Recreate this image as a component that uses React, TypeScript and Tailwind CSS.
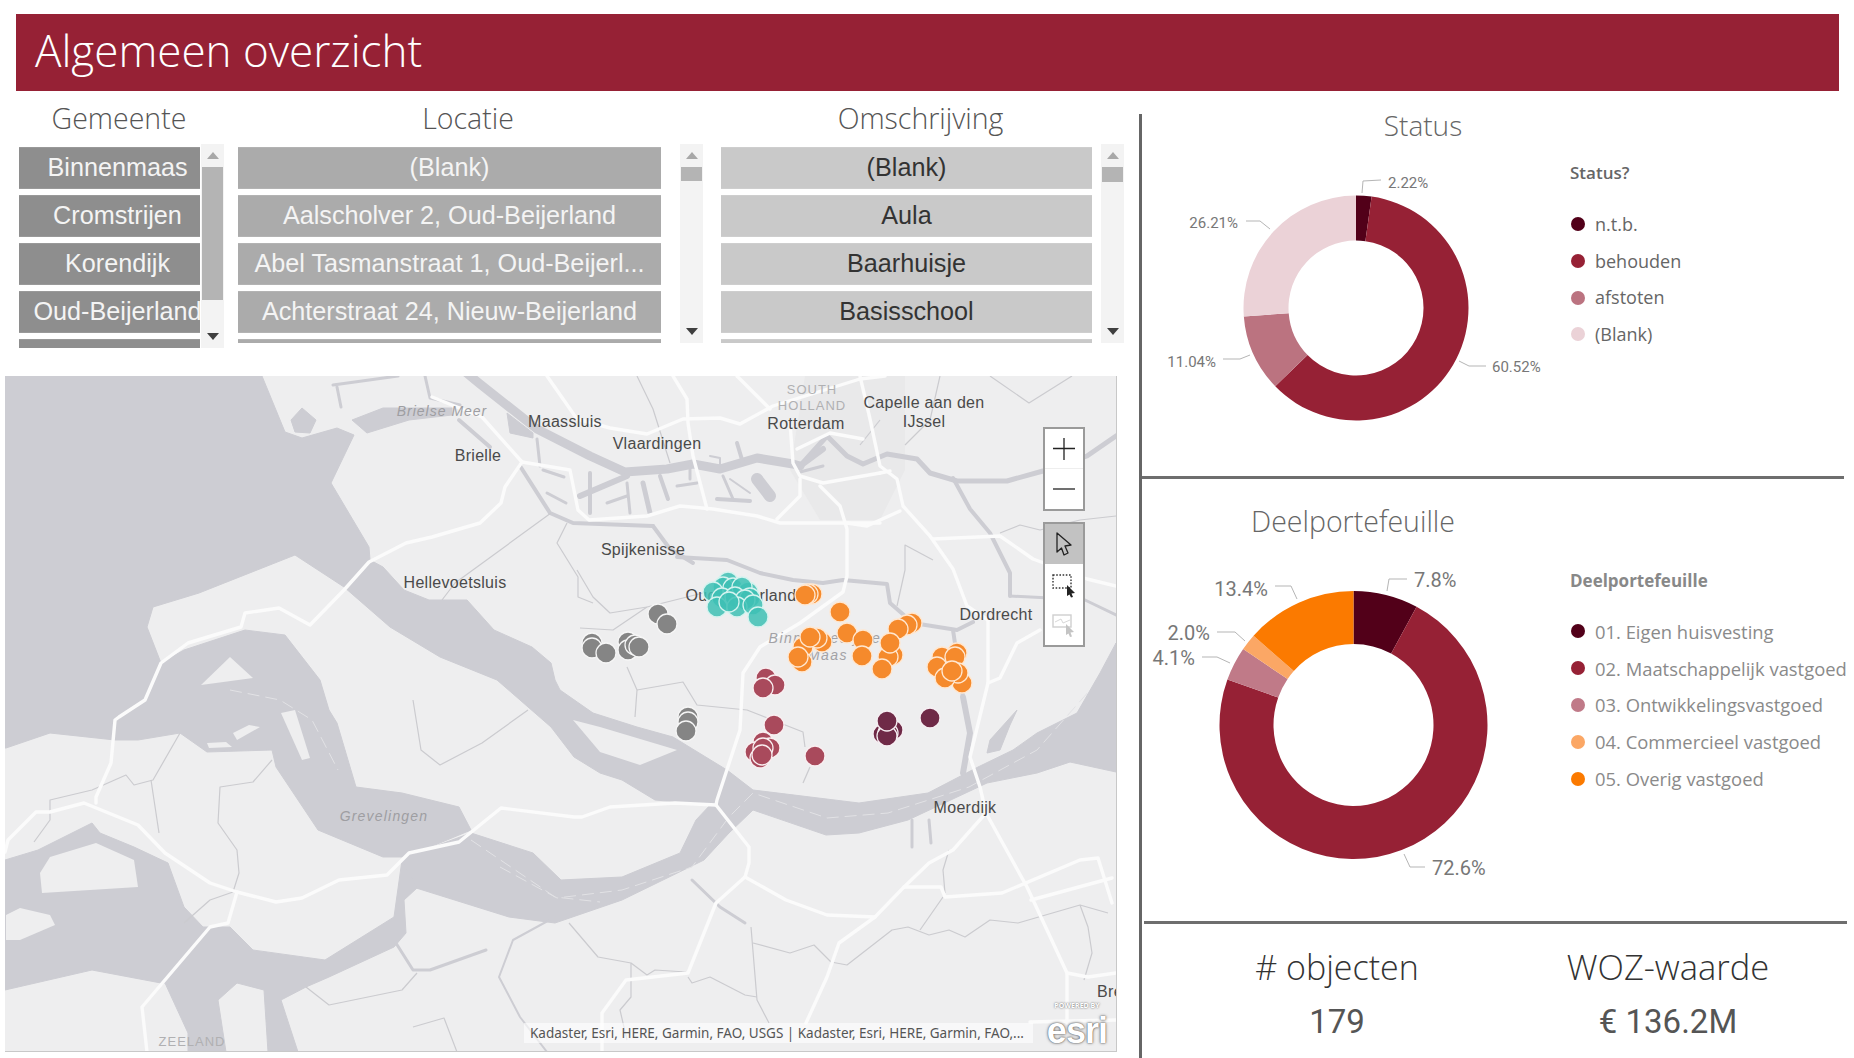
const RED = "#962135";

// ---------- chart helpers ----------
type Slice = { value: number; color: string };

function ringPaths(slices: Slice[], cx: number, cy: number, rx: number, ry: number, irx: number, iry: number) {
  let acc = 0;
  return slices.map((s) => {
    const a0 = (acc / 100) * Math.PI * 2;
    acc += s.value;
    const a1 = (acc / 100) * Math.PI * 2;
    const large = a1 - a0 > Math.PI ? 1 : 0;
    const p = (r1: number, r2: number, a: number) =>
      `${(cx + r1 * Math.sin(a)).toFixed(2)} ${(cy - r2 * Math.cos(a)).toFixed(2)}`;
    const d = `M${p(rx, ry, a0)} A${rx} ${ry} 0 ${large} 1 ${p(rx, ry, a1)} L${p(irx, iry, a1)} A${irx} ${iry} 0 ${large} 0 ${p(irx, iry, a0)} Z`;
    return { d, color: s.color };
  });
}

function Leader({ pts, x, y, label, end, size }: { pts: string; x: number; y: number; label: string; end?: boolean; size: number }) {
  return (
    <g>
      <polyline points={pts} fill="none" stroke="#b5b5b5" strokeWidth="1" />
      <text x={x} y={y} fontSize={size} fill="#777777" textAnchor={end ? "end" : "start"} dominantBaseline="central" fontFamily="Roboto, sans-serif">
        {label}
      </text>
    </g>
  );
}

const STATUS: Slice[] = [
  { value: 2.22, color: "#520019" },
  { value: 60.52, color: RED },
  { value: 11.04, color: "#bb7380" },
  { value: 26.22, color: "#ebd2d7" },
];

const DEEL: Slice[] = [
  { value: 7.8, color: "#520019" },
  { value: 72.7, color: RED },
  { value: 4.1, color: "#c07a88" },
  { value: 2.0, color: "#fba765" },
  { value: 13.4, color: "#fb7a00" },
];

function Legend({ title, items, titleClass, rowClass, textClass }: { title: string; items: { label: string; color: string }[]; titleClass: string; rowClass: string; textClass: string }) {
  return (
    <div className="flex flex-col">
      <div className={titleClass}>{title}</div>
      {items.map((it) => (
        <div key={it.label} className={rowClass}>
          <span className="w-[14px] h-[14px] rounded-full shrink-0" style={{ background: it.color }} />
          <span className={textClass}>{it.label}</span>
        </div>
      ))}
    </div>
  );
}

// ---------- slicers ----------
function Caret({ up, color }: { up?: boolean; color: string }) {
  return (
    <svg width="12" height="7" viewBox="0 0 12 7">
      <path d={up ? "M6 0 L12 7 L0 7 Z" : "M0 0 L12 0 L6 7 Z"} fill={color} />
    </svg>
  );
}

function Scrollbar({ thumb, height }: { thumb: number; height: string }) {
  return (
    <div className={`w-[23px] ${height} bg-[#f3f3f3] flex flex-col items-center shrink-0`}>
      <div className="h-[23px] flex items-center justify-center">
        <Caret up color="#a8a8a8" />
      </div>
      <div className="w-[21px] bg-[#b4b4b4]" style={{ height: thumb }} />
      <div className="flex-1" />
      <div className="h-[23px] flex items-center justify-center">
        <Caret color="#3f3f3f" />
      </div>
    </div>
  );
}

function SlicerTitle({ children }: { children: string }) {
  return <div className="mt-[9px] h-[36px] leading-[36px] pr-[5px] text-center text-[28.5px] font-light text-[#555555] font-['Open_Sans',sans-serif]">{children}</div>;
}

function Slicer({ title, items, width, itemW, itemClass, thumb, barH, gap }: { title: string; items: string[]; width: string; itemW: string; itemClass: string; thumb: number; barH: string; gap: string }) {
  return (
    <div className={`${width} shrink-0`}>
      <SlicerTitle>{title}</SlicerTitle>
      <div className="mt-[8px] flex items-start">
        <div className={`${itemW} ${barH} pt-[3px] flex flex-col gap-[6px] overflow-hidden shrink-0`}>
          {items.map((t, i) => (
            <div key={i} className={`h-[42px] shrink-0 flex items-center justify-center whitespace-nowrap overflow-hidden border-y border-white/10 text-[25.2px] font-['Liberation_Sans',Arial,sans-serif] ${itemClass}`}>
              {t}
            </div>
          ))}
        </div>
        <div className={gap} />
        <Scrollbar thumb={thumb} height={barH} />
      </div>
    </div>
  );
}

// ---------- map data (page coordinates) ----------
const LAND_ISLANDS = [
  "573,720 600,727 677,750 640,765 600,752",
  "230,657 201,685 253,678",
  "281,713 295,710 310,758 302,760",
  "233,733 249,725 260,727 237,740",
  "207,743 226,742 232,747 209,748",
  "40,873 50,857 96,843 134,860 138,887 42,893",
  "6,915 20,908 50,915 55,925 20,940 6,940",
];

const WATER = [
  "5,376 262,376 285,432 302,438 337,428 354,435 331,483 369,547 370,560 383,567 404,590 429,600 467,600 494,630 532,647 551,663 555,680 560,690 593,713 637,727 673,737 727,770 753,790 859,803 928,793 978,767 1013,750 1037,733 1077,713 1100,673 1116,643 1116,772 1070,762 1037,773 987,783 908,820 859,833 826,835 753,810 729,833 704,860 622,900 555,923 509,917 413,887 402,860 406,857 471,833 533,853 561,880 622,877 680,853 696,820 712,803 690,803 655,800 622,780 600,773 574,757 551,727 520,700 497,680 440,657 390,627 344,587 318,570 295,555 199,593 153,607 147,627 161,663 145,703 119,717 115,740 50,733 6,748 5,748",
  "161,663 184,650 245,630 285,635 320,680 329,710 337,723 356,787 402,793 459,807 471,830 406,857 383,857 318,830 276,767 272,750 207,752 180,733 138,740 115,740 119,717 145,703",
  "402,860 394,917 325,960 253,950 230,927 203,927 184,907 168,863 134,847 100,833 92,823 38,850 5,860 5,990 92,970 161,983 165,983 188,1033 188,1052 226,1052 218,1000 237,983 264,990 268,1052 298,1052 281,1000 306,987 329,977 394,947 406,933 404,900 417,888",
  "291,420 302,408 316,420 310,433 295,432",
  "352,420 383,408 452,408 452,415 409,420 367,433",
  "507,413 533,433 533,438 510,433",
  "1017,710 990,740 987,753 1000,750 1010,725",
];

const RIVERS: [string, number][] = [
  ["463,370 480,384 537,429 590,456 625,472 667,469 693,464 720,469 757,458 793,464 800,466", 9],
  ["800,466 827,436 847,456 863,464 887,454 917,459 930,473 957,481 1007,481 1043,471 1087,456 1116,436", 5],
  ["953,478 970,509 990,533 1010,573 1010,596", 4],
  ["1010,596 1050,598 1085,600 1116,615", 3],
  ["677,557 727,560 760,573 793,580 823,583 843,580 887,584 890,603 913,623 957,630 973,622", 4],
  ["653,526 670,549 693,563", 4],
  ["963,697 970,733 963,773", 6],
  ["953,630 963,697", 4],
  ["520,466 550,513 573,523 653,526", 4],
  ["537,439 540,466", 3],
  ["459,420 490,447", 4],
  ["543,470 564,477", 3],
  ["547,493 566,503", 3],
  ["333,385 398,376", 3],
  ["337,387 341,407", 3],
  ["425,376 430,398 460,405", 3],
  ["590,473 590,513", 4],
  ["580,496 627,476", 6],
  ["607,503 627,496", 3],
  ["627,483 630,513", 3],
  ["643,483 650,513", 5],
  ["660,476 668,499", 4],
  ["690,466 690,479", 3],
  ["677,486 697,483", 3],
  ["710,456 720,458 720,466", 2],
  ["737,443 743,463", 4],
  ["723,476 733,499", 3],
  ["717,499 750,501", 4],
  ["730,479 750,493", 2],
  ["757,479 770,496", 12],
  ["800,466 823,449", 6],
  ["800,472 823,466", 3],
  ["692,880 720,907 745,923", 3],
  ["912,820 912,847", 3],
  ["929,820 931,843", 3],
  ["394,940 413,970 430,970 486,950", 3],
  ["555,917 513,940 499,977 520,1017 547,1052", 2],
];

const ROADS = [
  "432,397 482,417 522,462 505,487 501,503 480,523 432,537 406,543 369,562 344,590 310,625 279,608 245,613 241,627 188,643 161,663 145,700 119,717 115,720 111,763 96,797 96,803",
  "5,852 8,840 36,812 50,812 84,803 138,825 165,853 210,883 237,892 276,902 302,898 339,880 387,875 409,853 459,842 501,808 574,817 582,817 610,807 675,803 716,805",
  "237,892 228,923 210,927 142,1007 147,1052",
  "522,462 570,470 578,510 589,520 647,516 680,506 713,509 757,516 780,523 847,523 880,523",
  "547,376 577,419 610,428 647,434 683,419 720,418 740,424 773,406 860,379 885,376",
  "673,376 687,399 688,423 693,456 707,509",
  "737,376 770,409",
  "790,423 793,463 800,476 823,483 880,473",
  "800,479 800,496 777,519",
  "820,486 840,506 847,529 847,576 843,592 800,623 760,647 743,673 740,730 717,800 716,805",
  "860,376 870,419 880,466 897,479 903,506 930,536 953,569 967,606 988,620",
  "797,449 830,433 863,439",
  "880,473 890,471",
  "847,523 867,526 900,511",
  "933,539 1000,536 1033,559 1087,579 1116,586",
  "988,620 988,683 970,757 980,787 986,813 1027,887 1067,973 1067,1023",
  "988,683 1000,678 1017,643 1040,630",
  "986,813 953,850 929,863 904,887 875,917 839,943 827,977 806,1023",
  "716,805 749,847 749,863 745,877 716,903 688,973 626,980 602,1013 602,1052",
  "745,877 786,900 827,915 875,917",
  "904,887 941,887 945,897 1002,893 1080,860 1098,858 1112,903",
  "1031,900 1112,878",
  "1067,973 1088,977 1116,973",
  "1030,1022 1116,1020",
];

const THIN = [
  "637,376 653,409 670,463",
  "551,513 455,583 442,600",
  "567,523 557,543 578,577 578,597 593,603",
  "577,570 593,597 610,613 647,607 703,593",
  "580,628 613,630 647,607",
  "627,667 637,690 635,717",
  "637,690 683,682 697,705 747,710 803,732 805,747",
  "810,767 803,783",
  "272,760 253,782 220,787 218,823 237,850 239,873 233,892",
  "180,733 153,780 134,785 126,775 92,790 50,800 50,820 34,842",
  "151,780 159,833",
  "233,892 210,900 184,923",
  "413,700 421,750 440,765 482,743 528,710",
  "306,987 329,1005 402,990 417,973",
  "413,1027 444,1018 457,1052",
  "569,923 598,957 631,963 647,975 655,970 686,972",
  "631,963 631,997 620,1010 627,1040",
  "688,977 692,983 710,977 745,995 757,997",
  "751,927 757,1000 769,1023",
  "753,943 790,953 814,945 831,962 847,965 892,930 908,927 929,935 949,930 965,937 990,920 1018,923 1080,905 1108,913",
  "1080,905 1088,927 1092,953 1084,980",
  "943,897 920,930",
  "949,850 943,870 945,893",
  "897,606 905,570 905,545 933,560",
  "860,445 880,420",
  "940,376 930,420 905,445",
  "990,376 1029,403 1072,376",
  "1000,533 1020,525 1040,530 1080,520 1116,516",
];

const DASHED = [
  "500,867 557,898 622,890 692,867 729,817 753,793 827,818 888,813 969,787 1037,750 1090,690",
  "471,840 555,897 600,902",
  "230,690 280,700 312,720 338,770",
];

const TEAL = [[728,582],[723,587],[713,592],[733,588],[748,592],[742,587],[722,598],[735,597],[750,598],[745,600],[717,607],[737,607],[753,605],[729,602],[758,617]];
const ORANGE = [[812,594],[808,594],[805,595],[840,612],[847,633],[863,640],[862,656],[912,623],[907,625],[898,629],[893,655],[888,657],[890,643],[882,669],[822,642],[817,638],[803,647],[802,662],[798,657],[810,637],[957,653],[942,657],[937,667],[955,657],[962,683],[958,673],[945,678],[952,671]];
const GRAY = [[658,614],[667,624],[592,643],[592,648],[606,653],[628,642],[628,650],[635,645],[639,647],[688,717],[688,722],[686,731]];
const ROSE = [[766,678],[775,685],[763,688],[774,725],[763,742],[770,748],[755,752],[763,748],[760,758],[762,755],[815,756]];
const DARK = [[893,730],[883,734],[888,733],[887,736],[887,721],[930,718]];

function Dots({ pts, color, edge, alpha }: { pts: number[][]; color: string; edge: string; alpha?: number }) {
  return (
    <g>
      {pts.map(([x, y], i) => (
        <circle key={i} cx={x} cy={y} r="10" fill={color} fillOpacity={alpha ?? 1} stroke={edge} strokeWidth="1.3" />
      ))}
    </g>
  );
}

const LABELS: { t: string; x: number; y: number; c?: string; s?: number; i?: boolean; ls?: number }[] = [
  { t: "SOUTH", x: 812, y: 389, c: "#b0b0b2", s: 13, ls: 1 },
  { t: "HOLLAND", x: 812, y: 405, c: "#b0b0b2", s: 13, ls: 1 },
  { t: "Maassluis", x: 565, y: 421 },
  { t: "Rotterdam", x: 806, y: 423 },
  { t: "Capelle aan den", x: 924, y: 402 },
  { t: "IJssel", x: 924, y: 421 },
  { t: "Brielse Meer", x: 442, y: 411, c: "#9e9ea2", s: 14, i: true, ls: 1 },
  { t: "Brielle", x: 478, y: 455 },
  { t: "Vlaardingen", x: 657, y: 443 },
  { t: "Spijkenisse", x: 643, y: 549 },
  { t: "Hellevoetsluis", x: 455, y: 582 },
  { t: "Oud-Beijerland", x: 741, y: 595 },
  { t: "Binnenbedijkte", x: 825, y: 638, c: "#a2a2a6", s: 14, i: true, ls: 1.5 },
  { t: "Maas", x: 828, y: 655, c: "#a2a2a6", s: 14, i: true, ls: 1.5 },
  { t: "Dordrecht", x: 996, y: 614 },
  { t: "Moerdijk", x: 965, y: 807 },
  { t: "Grevelingen", x: 384, y: 816, c: "#9e9ea2", s: 14, i: true, ls: 1.2 },
  { t: "ZEELAND", x: 192, y: 1041, c: "#b0b0b2", s: 13, ls: 1 },
  { t: "Bre", x: 1110, y: 991 },
];

function MapDrawing() {
  return (
    <svg className="absolute inset-0 block" width="1111" height="675" viewBox="5 376 1111 675">
      <rect x="5" y="376" width="1111" height="675" fill="#eeeeef" />
      <polygon points="805,376 905,376 905,470 880,520 820,520 790,470" fill="#e9e9ea" />
      {WATER.map((p, i) => (
        <polygon key={i} points={p} fill="#cdcdd3" stroke="#cdcdd3" strokeWidth="1" strokeLinejoin="round" />
      ))}
      {LAND_ISLANDS.map((p, i) => (
        <polygon key={i} points={p} fill="#eeeeef" />
      ))}
      {RIVERS.map(([p, w], i) => (
        <polyline key={i} points={p} fill="none" stroke="#cdcdd3" strokeWidth={w} strokeLinejoin="round" strokeLinecap="round" />
      ))}
      {DASHED.map((p, i) => (
        <polyline key={i} points={p} fill="none" stroke="#e2e2e5" strokeWidth="1" strokeDasharray="12 6" />
      ))}
      {THIN.map((p, i) => (
        <polyline key={i} points={p} fill="none" stroke="#cbcbcf" strokeWidth="1.2" strokeLinejoin="round" />
      ))}
      {ROADS.map((p, i) => (
        <polyline key={i} points={p} fill="none" stroke="#fbfbfb" strokeWidth="3.4" strokeLinejoin="round" strokeLinecap="round" />
      ))}
      {LABELS.map((l) => (
        <text
          key={l.t}
          x={l.x}
          y={l.y}
          textAnchor="middle"
          dominantBaseline="central"
          fontFamily="Liberation Sans, Arial, sans-serif"
          fontSize={l.s ?? 16}
          fontStyle={l.i ? "italic" : "normal"}
          letterSpacing={l.ls ?? 0.3}
          fill={l.c ?? "#4a4a4a"}
        >
          {l.t}
        </text>
      ))}
      <Dots pts={GRAY} color="#858585" edge="#f6f6f6" />
      <Dots pts={ROSE} color="#a94a5c" edge="#f9eef0" />
      <Dots pts={DARK} color="#6f2a47" edge="#f6eef2" />
      <Dots pts={TEAL} color="#3fc0b4" edge="#d4f3ef" alpha={0.86} />
      <Dots pts={ORANGE} color="#f58a2c" edge="#ffe7d0" />
    </svg>
  );
}

function MapControls() {
  return (
    <>
      <div className="absolute right-[31px] top-[51px] w-[42px] h-[84px] bg-white border-2 border-[#9a9a9a] flex flex-col">
        <div className="h-[40px] flex items-center justify-center border-b border-[#eeeeee]">
          <svg width="24" height="24" viewBox="0 0 24 24"><path d="M1 11.5H23M12 1V23" stroke="#222" strokeWidth="1.3" fill="none" /></svg>
        </div>
        <div className="flex-1 flex items-center justify-center">
          <svg width="24" height="4" viewBox="0 0 24 4"><path d="M1 2H23" stroke="#222" strokeWidth="1.3" fill="none" /></svg>
        </div>
      </div>
      <div className="absolute right-[31px] top-[146px] w-[42px] h-[125px] bg-white border-2 border-[#9a9a9a] flex flex-col">
        <div className="h-[40px] bg-[#c2c2c2] flex items-center justify-center">
          <svg width="18" height="24" viewBox="0 0 18 24"><path d="M2 1 L16 13 L10 14 L13 21 L9 23 L6.5 16 L2 20 Z" fill="#c2c2c2" stroke="#222" strokeWidth="1.3" strokeLinejoin="round" /></svg>
        </div>
        <div className="h-[42px] flex items-center justify-center">
          <svg width="26" height="26" viewBox="0 0 26 26">
            <rect x="2" y="3" width="18" height="13" fill="none" stroke="#333" strokeWidth="1.4" strokeDasharray="1.6 1.6" />
            <path d="M16 13 L24 21 L20.5 21.5 L22 25 L20 25.5 L18.5 22.5 L16 24 Z" fill="#222" />
          </svg>
        </div>
        <div className="flex-1 flex items-center justify-center">
          <svg width="26" height="26" viewBox="0 0 26 26">
            <rect x="2" y="2" width="18" height="12" fill="none" stroke="#cfcfcf" strokeWidth="1.4" />
            <path d="M4 9 L10 6 L12 10 L19 7" fill="none" stroke="#d8d8d8" strokeWidth="1" />
            <path d="M15 11 L23 19 L19.5 19.5 L21 23.5 L19 24 L17.5 20.5 L15 22 Z" fill="#c4c4c4" />
          </svg>
        </div>
      </div>
    </>
  );
}

export default function App() {
  const statusPaths = ringPaths(STATUS, 1356, 308, 112.5, 112.5, 67.5, 67.5);
  const deelPaths = ringPaths(DEEL, 1353.5, 725, 134, 134, 80, 81);
  const legendRow = "flex items-center gap-[10px] pl-[1px]";

  return (
    <div className="w-[1854px] h-[1058px] bg-white overflow-hidden font-['Open_Sans',sans-serif]">
      <div className="ml-[16px] mr-[15px] pt-[14px]">
        <div className="h-[77px] bg-[#962135] flex items-center pl-[19px] pb-[5px] text-[44px] font-light text-white">Algemeen overzicht</div>
      </div>

      <div className="flex h-[967px]">
        {/* Left: slicers + map */}
        <div className="w-[1139px] shrink-0 flex flex-col">
          <div className="h-[285px] pl-[19px] flex">
            <Slicer
              title="Gemeente"
              items={["Binnenmaas", "Cromstrijen", "Korendijk", "Oud-Beijerland", ""]}
              width="w-[205px]"
              itemW="w-[181px]"
              itemClass="bg-[#8e8e8e] text-[#f4f4f4] pl-[16px]"
              thumb={133}
              barH="h-[204px]"
              gap="w-[1px]"
            />
            <div className="w-[14px] shrink-0" />
            <Slicer
              title="Locatie"
              items={["(Blank)", "Aalscholver 2, Oud-Beijerland", "Abel Tasmanstraat 1, Oud-Beijerl...", "Achterstraat 24, Nieuw-Beijerland", ""]}
              width="w-[465px]"
              itemW="w-[423px]"
              itemClass="bg-[#ababab] text-[#f4f4f4]"
              thumb={14}
              barH="h-[199px]"
              gap="w-[19px]"
            />
            <div className="w-[18px] shrink-0" />
            <Slicer
              title="Omschrijving"
              items={["(Blank)", "Aula", "Baarhuisje", "Basisschool", ""]}
              width="w-[404px]"
              itemW="w-[371px]"
              itemClass="bg-[#c9c9c9] text-[#333333]"
              thumb={15}
              barH="h-[199px]"
              gap="w-[9px]"
            />
          </div>

          <div className="ml-[5px] w-[1112px] h-[676px] relative border-r border-b border-[#c8c8c8] overflow-hidden">
            <MapDrawing />
            <MapControls />
            <div className="absolute left-[519px] top-[647px] w-[509px] h-[20px] bg-white/60 pl-[6px] text-[13.5px] leading-[20px] whitespace-nowrap text-[#555555] font-['Noto_Sans',sans-serif]">
              Kadaster, Esri, HERE, Garmin, FAO, USGS | Kadaster, Esri, HERE, Garmin, FAO,...
            </div>
            <div className="absolute left-[1040px] top-[626px] w-[64px] flex flex-col items-center">
              <div className="h-[8px] text-[7px] leading-[8px] text-white font-bold [text-shadow:0_0_2px_#555]">POWERED BY</div>
              <div className="text-[36px] leading-[42px] font-bold text-white tracking-tight font-['Liberation_Sans',sans-serif] [text-shadow:0_0_3px_#555,0_0_1px_#555]">esri</div>
            </div>
          </div>
        </div>

        {/* Right: charts + cards */}
        <div className="flex-1 mt-[23px] border-l-[3px] border-[#666666] flex flex-col">
          <div className="h-[362px] flex">
            <div className="w-[428px] shrink-0">
              <div className="h-[22px] leading-[22px] pl-[134px] text-center text-[28px] font-light text-[#666666]">Status</div>
              <svg className="block" width="428" height="322" viewBox="1142 136 428 322">
                {statusPaths.map((p, i) => (
                  <path key={i} d={p.d} fill={p.color} />
                ))}
                <Leader pts="1362,193 1363,181 1381,180" x={1388} y={183} label="2.22%" size={15} />
                <Leader pts="1270,229 1260,221 1246,221" x={1238} y={223} label="26.21%" end size={15} />
                <Leader pts="1250,355 1240,359 1223,359" x={1216} y={362} label="11.04%" end size={15} />
                <Leader pts="1459,361 1469,366 1486,366" x={1492} y={367} label="60.52%" size={15} />
              </svg>
            </div>
            <Legend
              title="Status?"
              titleClass="mt-[47px] mb-[21px] h-[24px] leading-[24px] text-[17px] font-semibold text-[#666666]"
              rowClass={`${legendRow} h-[36.7px]`}
              textClass="text-[18px] text-[#666666]"
              items={[
                { label: "n.t.b.", color: "#520019" },
                { label: "behouden", color: RED },
                { label: "afstoten", color: "#bb7380" },
                { label: "(Blank)", color: "#ebd2d7" },
              ]}
            />
          </div>
          <div className="h-[3px] bg-[#6e6e6e] mr-[10px]" />

          <div className="h-[442px] flex">
            <div className="w-[428px] shrink-0 pt-[30px]">
              <div className="h-[24px] leading-[24px] pr-[6px] text-center text-[28.5px] font-light text-[#666666]">Deelportefeuille</div>
              <svg className="block" width="428" height="388" viewBox="1142 533 428 388">
                {deelPaths.map((p, i) => (
                  <path key={i} d={p.d} fill={p.color} />
                ))}
                <Leader pts="1387,591 1389,579 1407,579" x={1414} y={580} label="7.8%" size={20} />
                <Leader pts="1297,599 1291,586 1275,586" x={1268} y={589} label="13.4%" end size={20} />
                <Leader pts="1245,641 1235,632 1217,632" x={1210} y={633} label="2.0%" end size={20} />
                <Leader pts="1230,663 1217,657 1202,657" x={1195} y={658} label="4.1%" end size={20} />
                <Leader pts="1404,854 1410,867 1425,867" x={1432} y={868} label="72.6%" size={20} />
              </svg>
            </div>
            <Legend
              title="Deelportefeuille"
              titleClass="mt-[90px] mb-[20px] h-[24px] leading-[24px] text-[17px] font-bold text-[#888888]"
              rowClass={`${legendRow} h-[36.9px]`}
              textClass="text-[18.4px] text-[#8a8a8a] whitespace-nowrap"
              items={[
                { label: "01. Eigen huisvesting", color: "#520019" },
                { label: "02. Maatschappelijk vastgoed", color: RED },
                { label: "03. Ontwikkelingsvastgoed", color: "#c07a88" },
                { label: "04. Commercieel vastgoed", color: "#fba765" },
                { label: "05. Overig vastgoed", color: "#fb7a00" },
              ]}
            />
          </div>
          <div className="h-[3px] bg-[#6e6e6e] ml-[2px] mr-[7px]" />

          <div className="flex pt-[21px]">
            <div className="w-[390px] text-center">
              <div className="h-[44px] leading-[44px] text-[34px] font-light text-[#333333]">{"# objecten"}</div>
              <div className="mt-[11px] h-[44px] leading-[44px] text-[33px] text-[#555555] font-['Roboto',sans-serif]">179</div>
            </div>
            <div className="w-[272px] text-center">
              <div className="h-[44px] leading-[44px] text-[34.5px] font-light text-[#333333] whitespace-nowrap">WOZ-waarde</div>
              <div className="mt-[11px] h-[44px] leading-[44px] text-[33px] text-[#555555] font-['Roboto',sans-serif] whitespace-nowrap">€ 136.2M</div>
            </div>
          </div>
        </div>
      </div>
    </div>
  );
}
